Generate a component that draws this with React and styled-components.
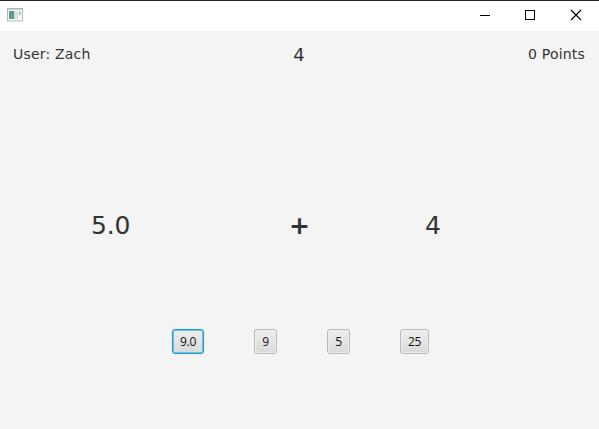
import React from "react";
import styled, { createGlobalStyle } from "styled-components";

const GlobalStyle = createGlobalStyle`
  * { box-sizing: border-box; }
  html, body { margin: 0; padding: 0; overflow: hidden; }
`;

const Window = styled.div`
  width: 599px;
  height: 429px;
  display: flex;
  flex-direction: column;
  background: #f4f4f4;
  border-top: 1px solid #252326;
  color: #333;
  font-family: "DejaVu Sans", Verdana, sans-serif;
`;

const TitleBar = styled.header`
  height: 30px;
  flex: none;
  display: flex;
  align-items: stretch;
  justify-content: space-between;
  background: #fff;
`;

const AppIcon = styled.svg`
  display: block;
  margin: 7px 0 0 7px;
`;

const Controls = styled.div`
  display: flex;
`;

const ControlButton = styled.button`
  width: 46px;
  height: 30px;
  padding: 8px 0 0 17px;
  border: 0;
  background: transparent;
  display: flex;
  align-items: flex-start;
  justify-content: flex-start;
  svg { display: block; }
`;

const StatusBar = styled.div`
  height: 46px;
  flex: none;
  display: grid;
  grid-template-columns: 200px 1fr 200px;
  align-items: center;
  padding: 0 14px 0 13px;
`;

const Status = styled.span`
  font-size: 14px;
  line-height: 20px;
  letter-spacing: 0.2px;
  text-align: ${(p) => p.$align || "left"};
`;

const Counter = styled.span`
  font-size: 18px;
  line-height: 24px;
  text-align: center;
  padding-top: 2px;
`;

const Problem = styled.main`
  height: 60px;
  flex: none;
  margin-top: 118px;
  padding-left: 91px;
  display: grid;
  grid-template-columns: 198px 136px 60px;
  align-items: center;
`;

const Term = styled.span`
  font-size: 25px;
  line-height: 30px;
  letter-spacing: -0.2px;
  padding-top: ${(p) => (p.$bold ? 2 : 1)}px;
  font-weight: ${(p) => (p.$bold ? 700 : 400)};
`;

const Answers = styled.div`
  display: flex;
  gap: 50px;
  margin: 74px 0 0 172px;
`;

const Answer = styled.button`
  width: ${(p) => p.$width}px;
  height: 25px;
  padding: 0;
  border: 1px solid ${(p) => (p.$focused ? "#199fc9" : "#b9b9b9")};
  border-radius: 3px;
  background: linear-gradient(#efefef, #d9d9d9);
  box-shadow: ${(p) =>
    p.$focused
      ? "inset 0 0 0 1px #70c0db, 0 0 1px #78c8e2"
      : "inset 0 0 0 1px #ececec"};
  color: #111;
  font: 12px/20px "Open Sans", "Noto Sans", sans-serif;
  letter-spacing: -0.3px;
`;

const answers = [
  { label: "9.0", width: 32, focused: true },
  { label: "9", width: 23 },
  { label: "5", width: 23 },
  { label: "25", width: 29 },
];

export default function App() {
  return (
    <>
      <GlobalStyle />
      <Window>
        <TitleBar>
          <AppIcon width="16" height="14" viewBox="0 0 16 14">
            <rect x="0.5" y="0.5" width="15" height="12.5" fill="#f7f9f9" stroke="#b4b8b9" />
            <path d="M1 1.5H15" stroke="#c9cecf" />
            <rect x="2" y="3" width="5" height="8" fill="#609b91" />
            <rect x="7" y="3" width="1.5" height="8" fill="#bdd4d0" />
            <rect x="9" y="3" width="2.5" height="8" fill="#dce4e4" />
            <path d="M12 3H14V6L12 8Z" fill="#b8cbc8" />
          </AppIcon>
          <Controls>
            <ControlButton aria-label="Minimize">
              <svg width="12" height="12" viewBox="0 0 12 12">
                <path d="M2 6.5H12" stroke="#000" />
              </svg>
            </ControlButton>
            <ControlButton aria-label="Maximize">
              <svg width="12" height="12" viewBox="0 0 12 12">
                <rect x="1.5" y="1.5" width="9" height="9" fill="none" stroke="#000" />
              </svg>
            </ControlButton>
            <ControlButton aria-label="Close">
              <svg width="12" height="12" viewBox="0 0 12 12">
                <path d="M1 1L11 11M11 1L1 11" fill="none" stroke="#000" strokeWidth="1.1" />
              </svg>
            </ControlButton>
          </Controls>
        </TitleBar>
        <StatusBar>
          <Status>User: Zach</Status>
          <Counter>4</Counter>
          <Status $align="right">0 Points</Status>
        </StatusBar>
        <Problem>
          <Term>5.0</Term>
          <Term $bold>+</Term>
          <Term>4</Term>
        </Problem>
        <Answers>
          {answers.map((a) => (
            <Answer key={a.label} $width={a.width} $focused={a.focused}>
              {a.label}
            </Answer>
          ))}
        </Answers>
      </Window>
    </>
  );
}
